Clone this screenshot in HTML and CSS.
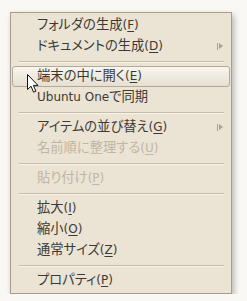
FILE: index.html
```html
<!DOCTYPE html>
<html lang="ja">
<head>
  <meta charset="UTF-8">
  <title>Desktop menu</title>
  <link rel="stylesheet" href="styles.css">
</head>
<body>

  <div class="menu">
    <div class="item"><span class="ja">フォルダの生成</span>(<u>F</u>)</div>
    <div class="item has-sub"><span class="ja">ドキュメントの生成</span>(<u>D</u>)<span class="sub-arrow"></span></div>
    <div class="sep"></div>
    <div class="item active"><span class="ja">端末の中に開く</span>(<u>E</u>)</div>
    <div class="item">Ubuntu One<span class="ja">で同期</span></div>
    <div class="sep"></div>
    <div class="item has-sub"><span class="ja">アイテムの並び替え</span>(<u>G</u>)<span class="sub-arrow"></span></div>
    <div class="item disabled"><span class="ja">名前順に整理する</span>(<u>U</u>)</div>
    <div class="sep"></div>
    <div class="item disabled"><span class="ja">貼り付け</span>(<u>P</u>)</div>
    <div class="sep"></div>
    <div class="item"><span class="ja">拡大</span>(<u>I</u>)</div>
    <div class="item"><span class="ja">縮小</span>(<u>O</u>)</div>
    <div class="item"><span class="ja">通常サイズ</span>(<u>Z</u>)</div>
    <div class="sep"></div>
    <div class="item"><span class="ja">プロパティ</span>(<u>P</u>)</div>
  </div>

  <!-- mouse pointer over the menu -->
  <svg class="cursor" width="12" height="19" viewBox="0 0 12 19">
    <path d="M0.5 0.5 L0.5 15.5 L4 12.2 L6.6 18.2 L8.9 17.2 L6.4 11.4 L11 11.4 Z" fill="#fff" stroke="#111" stroke-width="1" stroke-linejoin="round"/>
  </svg>

</body>
</html>
```

FILE: styles.css
```css
body {
  margin: 0;
  background-color: #f9f8f4;
  font-family: 'DejaVu Sans', 'Noto Sans CJK JP', sans-serif;
  font-size: 12px;
  color: #3c3a35;
}

.menu {
  position: relative;
  width: 220px;
  margin: 12px 0 0 10px;
  padding: 2px 0;
  background-color: #ebe3d4;
  border: 1px solid #a69e8e;
  box-shadow: 2px 3px 6px rgba(0,0,0,0.28);
}

.item {
  position: relative;
  height: 21px;
  line-height: 21px;
  padding-left: 26px;
  white-space: nowrap;
  box-sizing: border-box;
}

/* japanese runs: proportional kana like the desktop's PGothic */
.ja {
  font-family: 'Noto Sans CJK JP', sans-serif;
  font-size: 13.3px;
  font-feature-settings: "palt";
  line-height: 1;
}

.item u {
  text-decoration-thickness: 1px;
  text-underline-offset: 2px;
}

.item.active {
  margin: 0 1px;
  padding-left: 24px;
  line-height: 19px;
  border: 1px solid #b3a995;
  border-radius: 3px;
  background: linear-gradient(#f8f5ef, #e6dfd2);
}

.item.disabled {
  color: #c0b6a3;
}

.sub-arrow {
  position: absolute;
  right: 7px;
  top: 7px;
  width: 7px;
  height: 7px;
  border-left: 1px solid #a9a190;
  box-sizing: border-box;
}

.sub-arrow::after {
  content: "";
  position: absolute;
  left: 1px;
  top: 0;
  border-style: solid;
  border-width: 3.5px 0 3.5px 4px;
  border-color: transparent transparent transparent #a9a190;
}

.sep {
  height: 9px;
  margin: 0 7px 0 8px;
  display: flex;
  flex-direction: column;
  justify-content: center;
}

.sep::before {
  content: "";
  height: 1px;
  background-color: #c6bcaa;
  border-bottom: 1px solid #f8f4ec;
}

.cursor {
  position: absolute;
  left: 27px;
  top: 74px;
}
```
